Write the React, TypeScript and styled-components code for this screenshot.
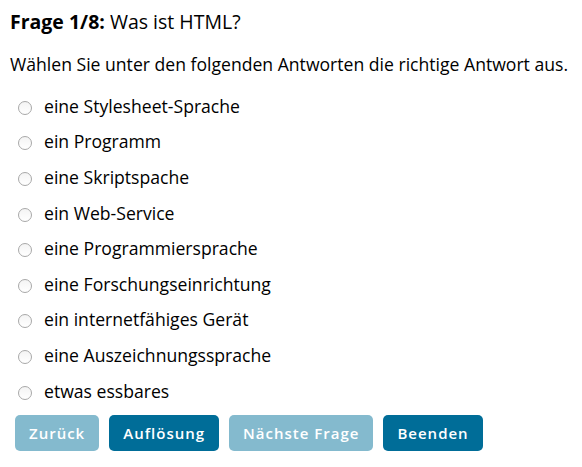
import React from "react";
import styled, { createGlobalStyle } from "styled-components";

const Global = createGlobalStyle`
  html, body { margin: 0; padding: 0; background: #fff; }
  body { font-family: "Open Sans", "Noto Sans", sans-serif; color: #000; }
`;

const Quiz = styled.div`
  padding: 4px 10px 10px 10px;
`;

const Title = styled.h2`
  margin: 0;
  font-size: 19.5px;
  line-height: 36px;
  font-weight: 400;
  strong { font-weight: 700; }
`;

const Prompt = styled.p`
  margin: 11px 0 11px;
  font-size: 17.6px;
  line-height: 26px;
`;

const Options = styled.div`
  display: flex;
  flex-direction: column;
`;

const Option = styled.label`
  display: flex;
  align-items: center;
  gap: 12px;
  height: 35.6px;
  padding-left: 8px;
  font-size: 17.6px;
  cursor: pointer;
`;

const Radio = styled.input.attrs({ type: "radio" })`
  appearance: none;
  margin: 4px 0 0;
  width: 14px;
  height: 14px;
  border-radius: 50%;
  border: 1px solid #a8a8a8;
  background: linear-gradient(#f4f4f4, #fff);
  flex: none;
`;

const Buttons = styled.div`
  display: flex;
  gap: 10px;
  margin-top: 7px;
  padding-left: 5px;
`;

const Button = styled.button<{ $active?: boolean }>`
  height: 36px;
  padding: 0 14px;
  border: none;
  border-radius: 5px;
  background: ${(p) => (p.$active ? "#006d98" : "#84bace")};
  color: #fff;
  font-family: "Open Sans", "Noto Sans", sans-serif;
  font-size: 15px;
  font-weight: 600;
  letter-spacing: 1px;
  cursor: pointer;
`;

const answers = [
  "eine Stylesheet-Sprache",
  "ein Programm",
  "eine Skriptspache",
  "ein Web-Service",
  "eine Programmiersprache",
  "eine Forschungseinrichtung",
  "ein internetfähiges Gerät",
  "eine Auszeichnungssprache",
  "etwas essbares",
];

export default function App() {
  return (
    <>
      <Global />
      <Quiz>
        <Title>
          <strong>Frage 1/8:</strong> Was ist HTML?
        </Title>
        <Prompt>Wählen Sie unter den folgenden Antworten die richtige Antwort aus.</Prompt>
        <Options>
          {answers.map((a) => (
            <Option key={a}>
              <Radio name="answer" />
              {a}
            </Option>
          ))}
        </Options>
        <Buttons>
          <Button>Zurück</Button>
          <Button $active>Auflösung</Button>
          <Button>Nächste Frage</Button>
          <Button $active>Beenden</Button>
        </Buttons>
      </Quiz>
    </>
  );
}
